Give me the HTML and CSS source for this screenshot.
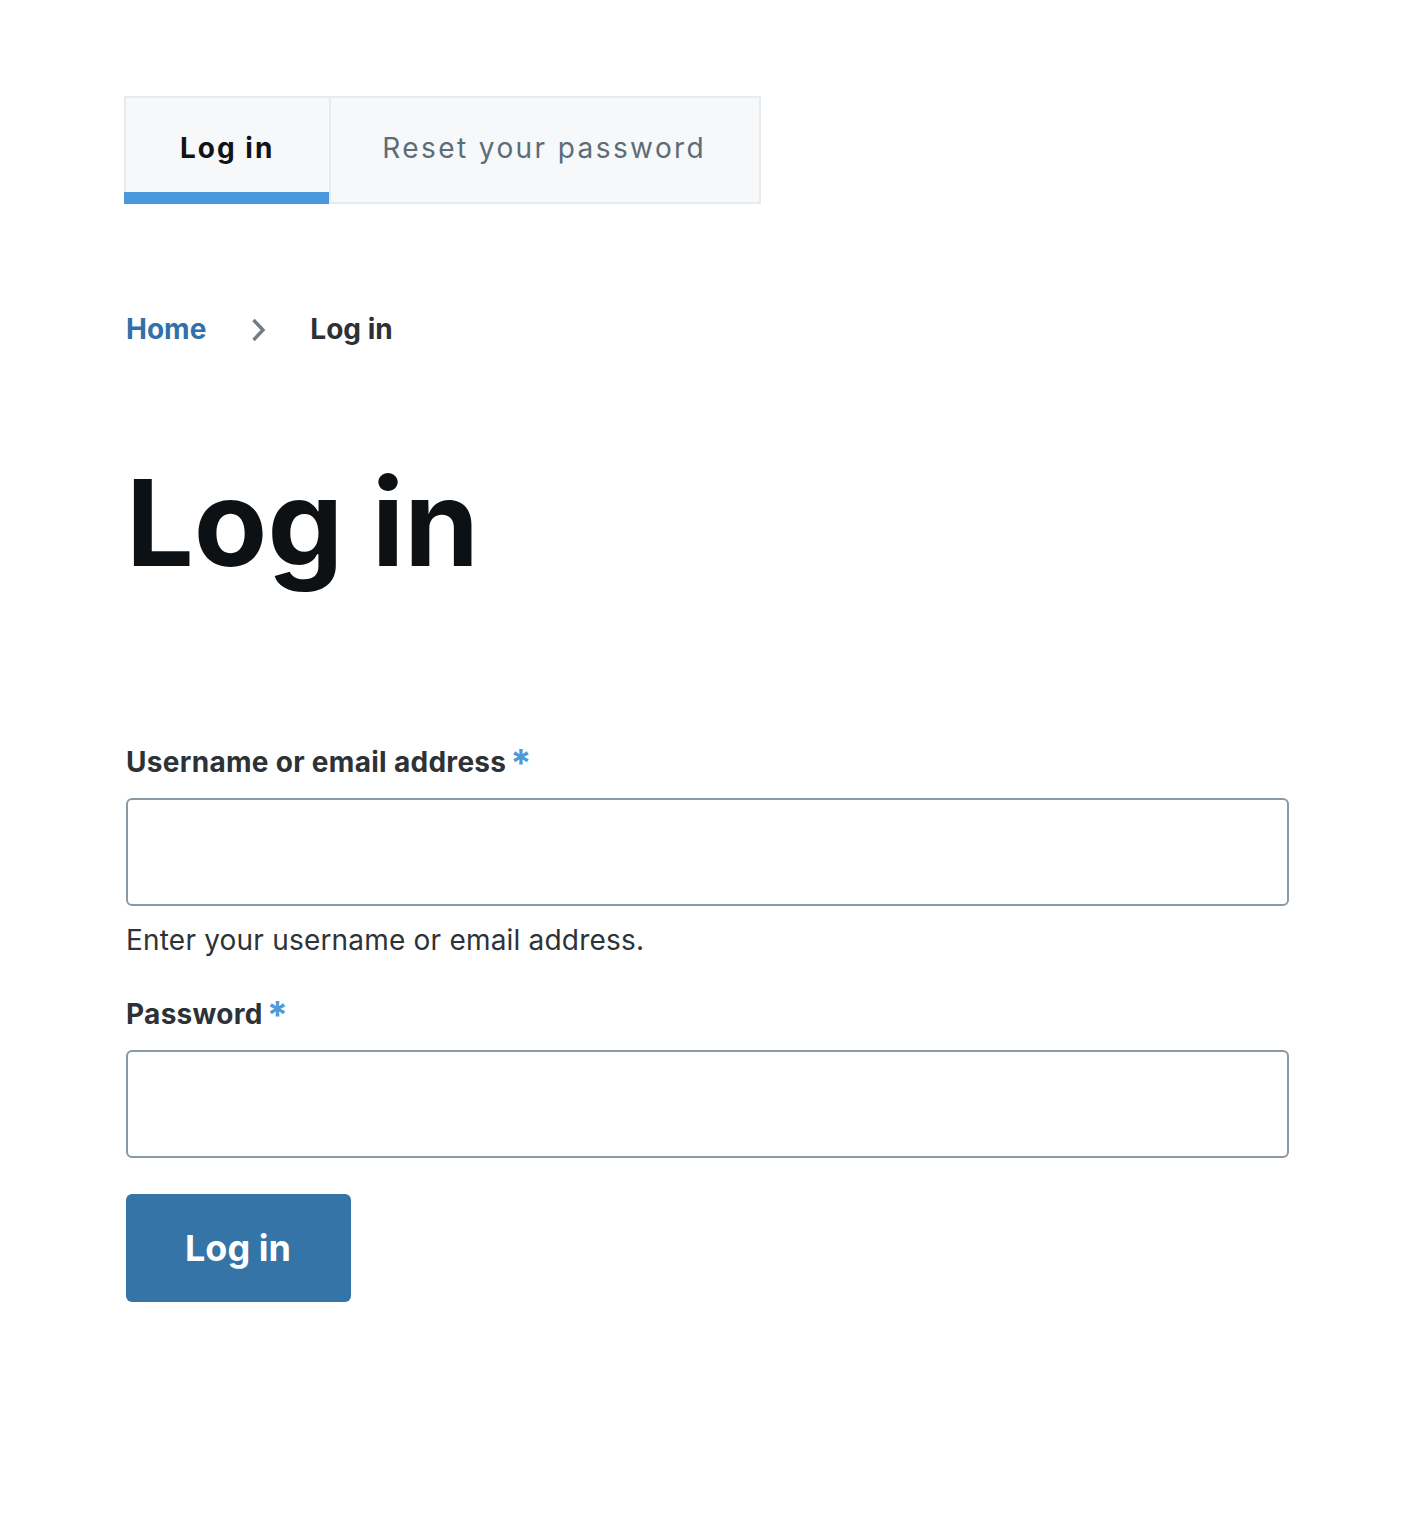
FILE: index.html
```html
<!DOCTYPE html>
<html lang="en">
<head>
<meta charset="utf-8">
<title>Log in</title>
<link rel="stylesheet" href="styles.css">
</head>
<body>
<main class="page">
  <nav class="tabs" aria-label="Tabs">
    <a class="tab tab-active" href="#">Log in</a>
    <a class="tab tab-other" href="#">Reset your password</a>
  </nav>

  <nav class="breadcrumb" aria-label="Breadcrumb">
    <a class="crumb-link" href="#">Home</a>
    <svg class="chevron" width="16" height="24" viewBox="0 0 16 24" aria-hidden="true">
      <path d="M2.5 2 L12 12 L2.5 22" fill="none" stroke="#6e7d88" stroke-width="3.4" stroke-linecap="butt" stroke-linejoin="miter"/>
    </svg>
    <span class="crumb-current">Log in</span>
  </nav>

  <h1 class="title">Log in</h1>

  <form class="login-form">
    <label class="field-label" for="name">Username or email address <span class="req">*</span></label>
    <input class="field-input" id="name" type="text">
    <p class="field-desc">Enter your username or email address.</p>

    <label class="field-label field-label-pass" for="pass">Password <span class="req">*</span></label>
    <input class="field-input" id="pass" type="password">

    <button class="btn" type="button">Log in</button>
  </form>
</main>
</body>
</html>
```

FILE: styles.css
```css
* { box-sizing: border-box; }

html, body {
  margin: 0;
  padding: 0;
  background: #ffffff;
}

body {
  font-family: Inter, "Noto Sans", "Liberation Sans", sans-serif;
  color: #2e3338;
}

.page {
  padding: 96px 0 0 126px;
  width: 1289px;
}

/* Tabs */
.tabs {
  display: flex;
  width: fit-content;
  margin-left: -2px;
  border: 2px solid #e7ebee;
  background: #f6f8f9;
}

.tab {
  position: relative;
  display: flex;
  align-items: center;
  height: 104px;
  padding: 0 56px 4px 54px;
  font-size: 28px;
  letter-spacing: 2px;
  text-decoration: none;
  color: #5b6d79;
  font-weight: 400;
}

.tab-active {
  color: #111315;
  font-weight: 700;
  border-right: 2px solid #e7ebee;
  padding-right: 55px;
}

.tab-other {
  padding-left: 51px;
  padding-right: 53px;
  letter-spacing: 2.4px;
}

.tab-active::after {
  content: "";
  position: absolute;
  left: -2px;
  right: 0;
  bottom: -2px;
  height: 12px;
  background: #4a99dc;
}

/* Breadcrumb */
.breadcrumb {
  display: flex;
  align-items: center;
  margin-top: 107px;
  height: 36px;
  font-size: 28px;
  font-weight: 700;
  line-height: 36px;
}

.crumb-link {
  color: #3171a7;
  text-decoration: none;
}

.chevron {
  margin: 0 43px 0 45px;
  position: relative;
  top: 1px;
}

.crumb-current {
  color: #2c3136;
}

/* Title */
.title {
  margin: 116px 0 0 0;
  font-size: 120px;
  line-height: 120px;
  font-weight: 700;
  letter-spacing: 0;
  color: #0e1113;
}

/* Form */
.login-form {
  display: flex;
  flex-direction: column;
  align-items: flex-start;
  margin-top: 161px;
}

.field-label {
  display: block;
  font-size: 28px;
  line-height: 36px;
  font-weight: 700;
  color: #2d3237;
  letter-spacing: 0.3px;
}

.field-label-pass {
  margin-top: 38px;
}

.req {
  color: #4e9ad6;
  font-size: 38px;
  line-height: 0;
  position: relative;
  top: 5px;
  margin-left: -3px;
}

.field-input {
  display: block;
  width: 1163px;
  height: 108px;
  margin-top: 18px;
  border: 2px solid #8b99a3;
  border-radius: 6px;
  background: #ffffff;
  font-family: inherit;
  font-size: 28px;
  padding: 0 20px;
  outline: none;
}

.field-desc {
  margin: 16px 0 0 0;
  font-size: 28px;
  line-height: 36px;
  font-weight: 400;
  color: #2e3338;
  letter-spacing: 0.2px;
}

.btn {
  margin-top: 36px;
  height: 108px;
  padding: 0 60px 0 59px;
  border: 0;
  border-radius: 6px;
  background: #3574a7;
  color: #ffffff;
  font-family: inherit;
  font-size: 36px;
  font-weight: 700;
  cursor: pointer;
}
```
